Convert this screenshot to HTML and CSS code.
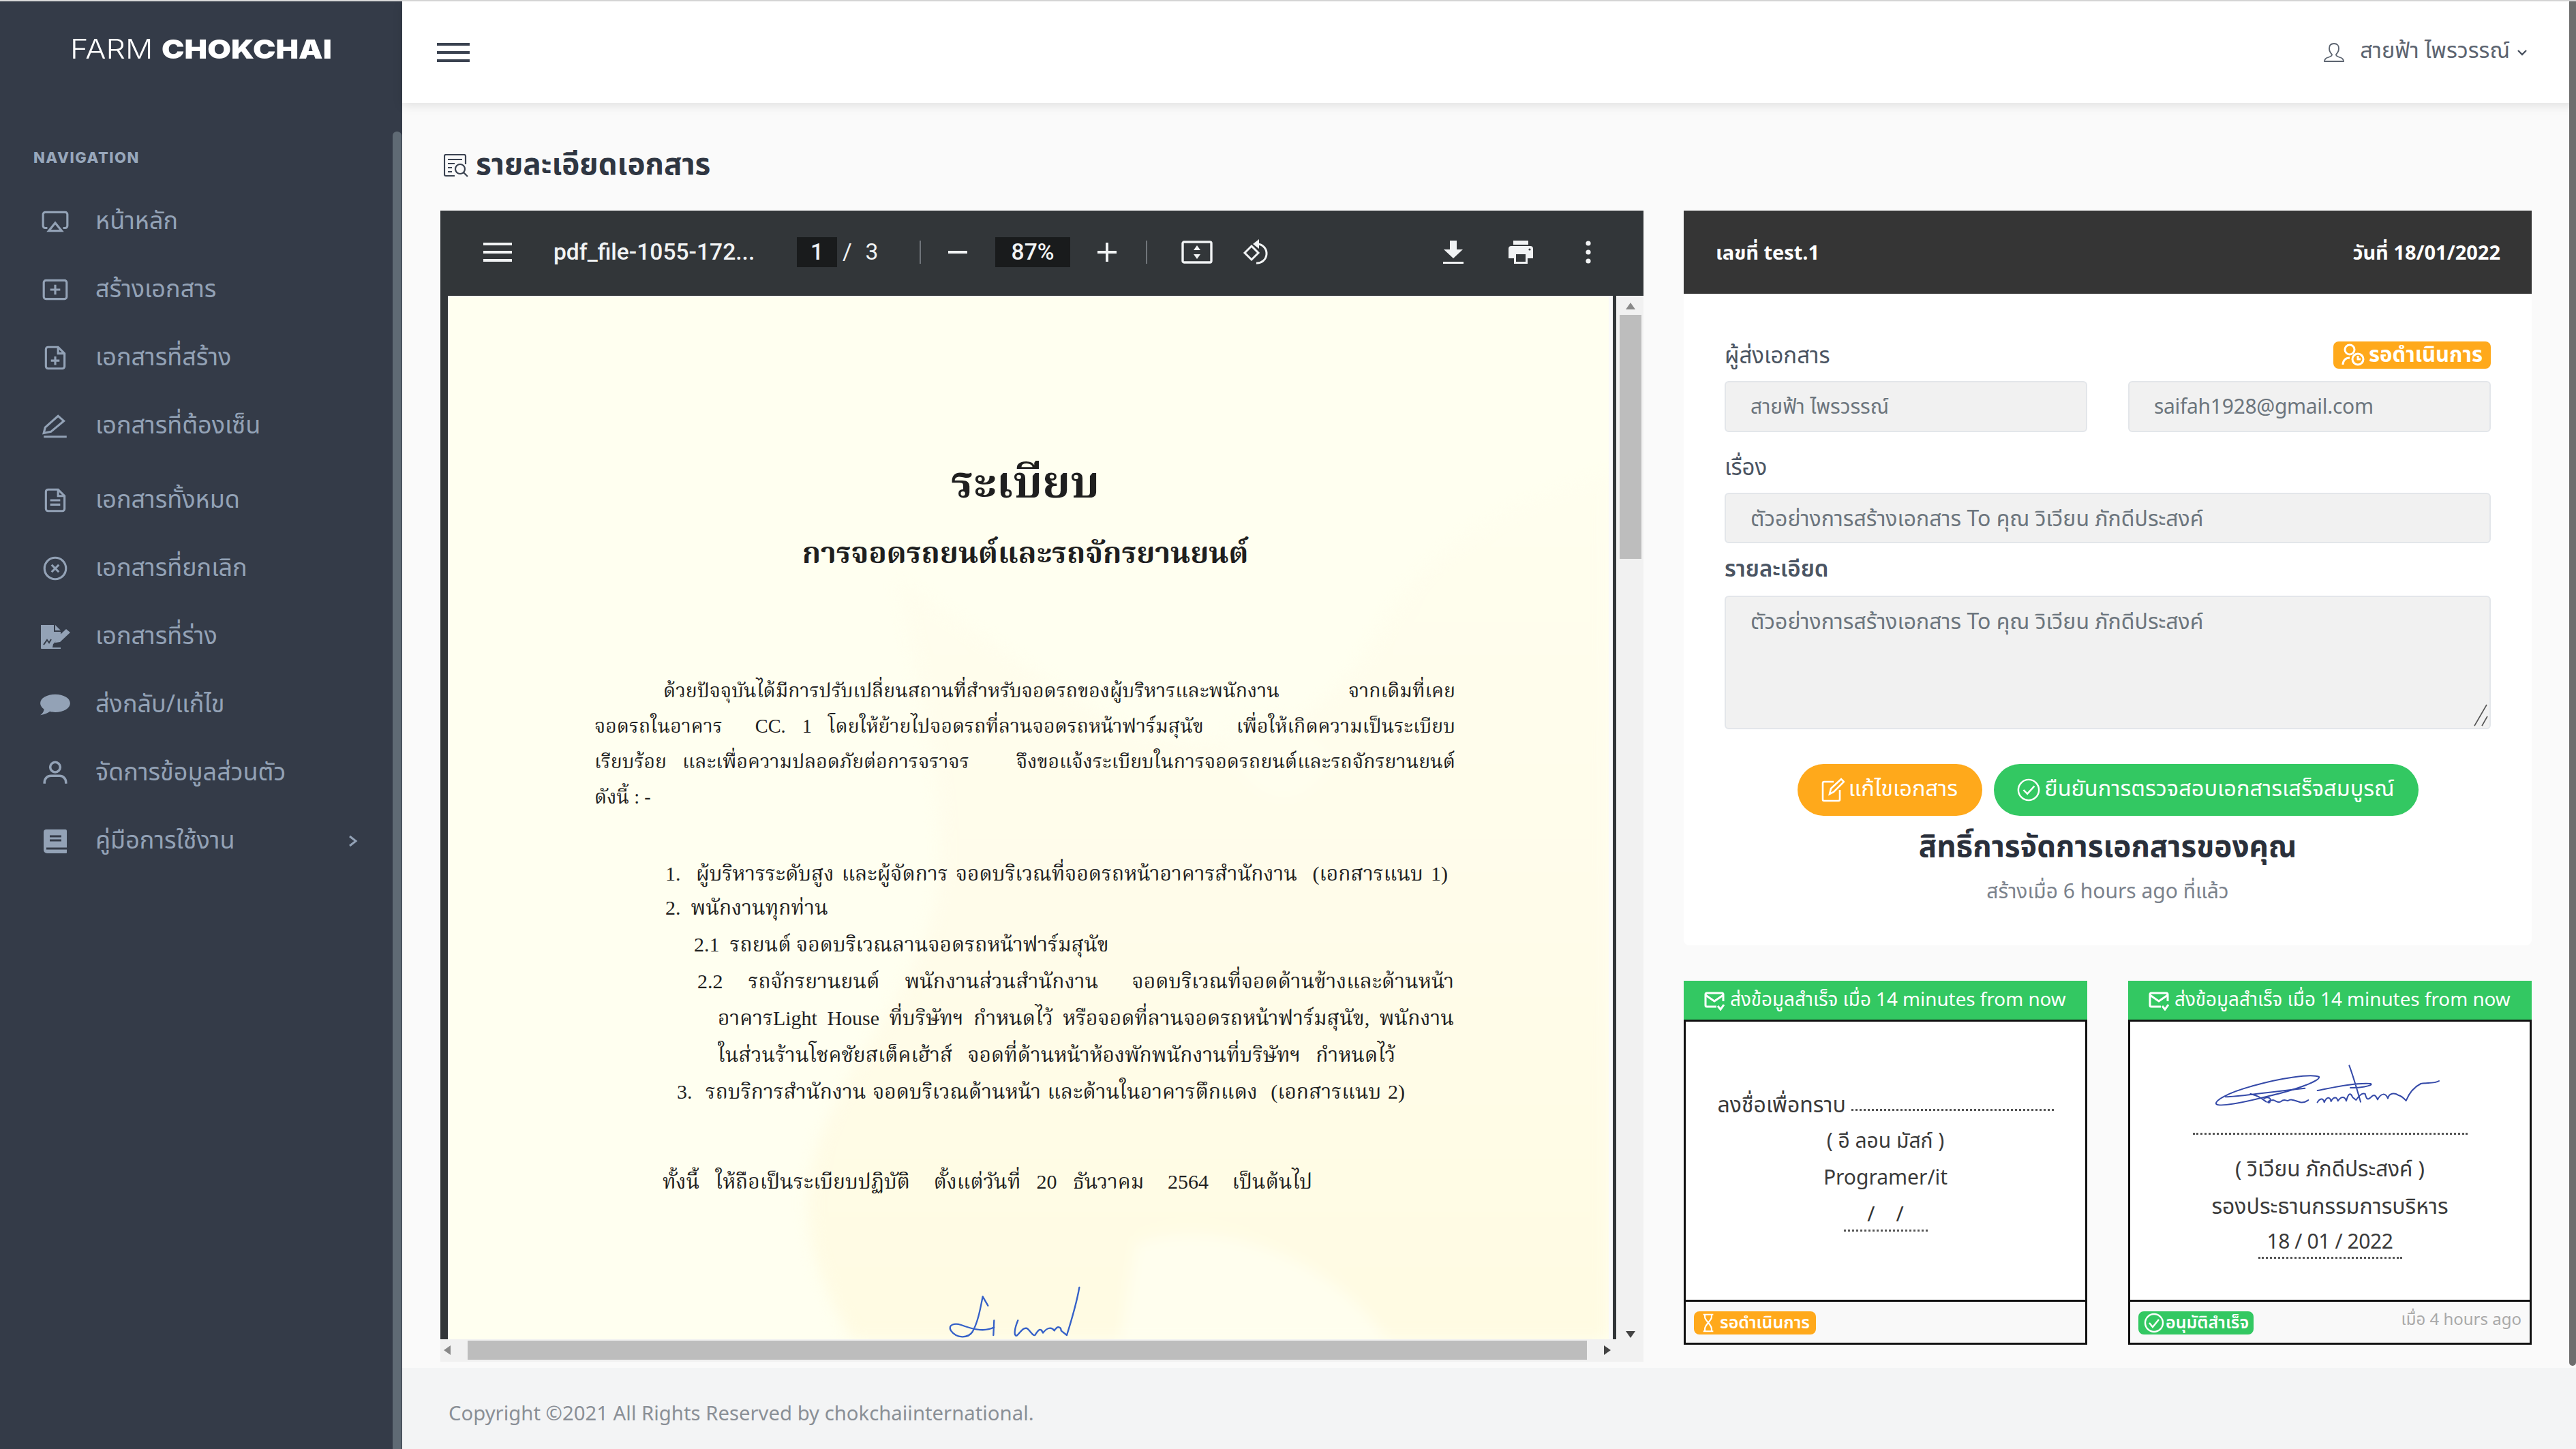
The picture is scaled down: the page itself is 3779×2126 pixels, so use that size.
FILE: index.html
```html
<!DOCTYPE html>
<html lang="th">
<head>
<meta charset="utf-8">
<title>รายละเอียดเอกสาร</title>
<link rel="stylesheet" href="styles.css">
</head>
<body>
<div class="app">
  <aside class="sidebar">
    <div class="logo"><span class="logo-text"><span class="logo-light">FARM</span> <span class="logo-bold">CHOKCHAI</span></span></div>
    <div class="nav-label">NAVIGATION</div>
    <nav class="nav">
      <a class="nav-item"><svg class="nav-icon" viewBox="0 0 40 30" fill="none" stroke="currentColor" stroke-width="3"><path d="M9 24H6a3 3 0 0 1-3-3V5a3 3 0 0 1 3-3h28a3 3 0 0 1 3 3v16a3 3 0 0 1-3 3h-3"/><path d="M20 17l9 11H11z"/></svg><span>หน้าหลัก</span></a>
      <a class="nav-item"><svg class="nav-icon" viewBox="0 0 40 30" fill="none" stroke="currentColor" stroke-width="3"><rect x="4" y="2" width="32" height="26" rx="3"/><path d="M20 8v14M13 15h14"/></svg><span>สร้างเอกสาร</span></a>
      <a class="nav-item"><svg class="nav-icon" viewBox="0 0 40 34" fill="none" stroke="currentColor" stroke-width="3"><path d="M7 5a3 3 0 0 1 3-3h14l9 9v18a3 3 0 0 1-3 3H10a3 3 0 0 1-3-3z"/><path d="M24 2v9h9M20 15v12M14 21h12"/></svg><span>เอกสารที่สร้าง</span></a>
      <a class="nav-item"><svg class="nav-icon" viewBox="0 0 40 34" fill="none" stroke="currentColor" stroke-width="3"><path d="M4 27l2-8L24 3l8 7-18 15z"/><path d="M4 32h32"/></svg><span>เอกสารที่ต้องเซ็น</span></a>
      <a class="nav-item nav-gap"><svg class="nav-icon" viewBox="0 0 40 34" fill="none" stroke="currentColor" stroke-width="3"><path d="M7 5a3 3 0 0 1 3-3h14l9 9v18a3 3 0 0 1-3 3H10a3 3 0 0 1-3-3z"/><path d="M24 2v9h9M13 17h14M13 23h14"/></svg><span>เอกสารทั้งหมด</span></a>
      <a class="nav-item"><svg class="nav-icon" viewBox="0 0 40 34" fill="none" stroke="currentColor" stroke-width="3"><circle cx="20" cy="17" r="15"/><path d="M15 12l10 10M25 12L15 22"/></svg><span>เอกสารที่ยกเลิก</span></a>
      <a class="nav-item"><svg class="nav-icon nav-icon-wide" viewBox="0 0 46 36" fill="currentColor"><path d="M2 1h19v10h10v7L20 29l-1 5h12v2H3a1 1 0 0 1-1-1z"/><path d="M23 1l8 8h-8zM23 27l1-6 15-14 6 5-15 14z"/><path d="M6 30l5-7 3 4 3-5" fill="none" stroke="#343b48" stroke-width="2"/></svg><span>เอกสารที่ร่าง</span></a>
      <a class="nav-item"><svg class="nav-icon nav-icon-wide" viewBox="0 0 42 30" fill="currentColor"><path d="M21 1c11 0 20 5 20 12s-9 12-20 12c-3 0-5 0-7-1-3 2-7 4-13 5 3-2 5-5 5-8-3-2-5-5-5-8C1 6 10 1 21 1z"/></svg><span>ส่งกลับ/แก้ไข</span></a>
      <a class="nav-item"><svg class="nav-icon" viewBox="0 0 40 34" fill="none" stroke="currentColor" stroke-width="3.4"><circle cx="20" cy="9" r="7"/><path d="M5 32v-2a9 9 0 0 1 9-9h12a9 9 0 0 1 9 9v2"/></svg><span>จัดการข้อมูลส่วนตัว</span></a>
      <a class="nav-item"><svg class="nav-icon" viewBox="0 0 40 36" fill="currentColor"><path d="M7 1h28a2 2 0 0 1 2 2v32a1 1 0 0 1-1 1H8a5 5 0 0 1-5-5V5a4 4 0 0 1 4-4z"/><path d="M12 11h17M12 17h17M7 29h30" stroke="#343b48" stroke-width="3"/></svg><span>คู่มือการใช้งาน</span><svg class="nav-caret" viewBox="0 0 16 18" fill="none" stroke="currentColor" stroke-width="3"><path d="M3 2l9 7-9 7"/></svg></a>
    </nav>
    <div class="sidebar-scroll"></div>
  </aside>

  <div class="main">
    <header class="topbar">
      <svg class="burger" viewBox="0 0 48 30" fill="none" stroke="#3a4250" stroke-width="4"><path d="M0 3h48M0 15h48M0 27h48"/></svg>
      <div class="user">
        <svg class="user-icon" viewBox="0 0 32 28" fill="none" stroke="#5c6470" stroke-width="1.8"><path d="M16 1c-5 0-7 3-7 7s2 7 4 9c0 2-2 3-5 4-4 1-6 3-6 6h28c0-3-2-5-6-6-3-1-5-2-5-4 2-2 4-5 4-9s-2-7-7-7z"/></svg>
        <span class="user-name">สายฟ้า ไพรวรรณ์</span>
        <svg class="user-caret" viewBox="0 0 16 10" fill="none" stroke="#4a5260" stroke-width="2.4"><path d="M2 2l6 6 6-6"/></svg>
      </div>
    </header>

    <main class="content">
      <h1 class="page-title">
        <svg class="title-icon" viewBox="0 0 36 34" fill="none" stroke="#3a4250" stroke-width="2.2"><path d="M16 32H3a2 2 0 0 1-2-2V3a2 2 0 0 1 2-2h27a2 2 0 0 1 2 2v12"/><path d="M6 8h21M6 14h10M6 20h6M6 26h6"/><circle cx="24" cy="22" r="7"/><path d="M29 27l6 6"/></svg>
        <span>รายละเอียดเอกสาร</span>
      </h1>

      <div class="columns">
        <section class="pdf">
          <div class="pdf-bar">
            <svg class="tb-burger" viewBox="0 0 42 30" fill="none" stroke="#f1f3f4" stroke-width="4"><path d="M0 3h42M0 15h42M0 27h42"/></svg>
            <span class="tb-title">pdf_file-1055-172...</span>
            <span class="tb-pagebox">1</span>
            <span class="tb-slash">/</span>
            <span class="tb-total">3</span>
            <i class="tb-sep tb-sep-a"></i>
            <svg class="tb-btn tb-minus" viewBox="0 0 30 30" fill="none" stroke="#f1f3f4" stroke-width="4"><path d="M1 15h28"/></svg>
            <span class="tb-zoom">87%</span>
            <svg class="tb-btn tb-plus" viewBox="0 0 30 30" fill="none" stroke="#f1f3f4" stroke-width="4"><path d="M1 15h28M15 1v28"/></svg>
            <i class="tb-sep tb-sep-b"></i>
            <svg class="tb-fit" viewBox="0 0 46 34" fill="none" stroke="#f1f3f4" stroke-width="3.4"><rect x="2" y="2" width="42" height="30" rx="2"/><path d="M23 7l-5 7h10zM23 27l-5-7h10z" fill="#f1f3f4" stroke="none"/></svg>
            <svg class="tb-rot" viewBox="0 0 43 38" fill="none" stroke="#f1f3f4" stroke-width="3"><path d="M13 10l10 10-10 10L3 20z"/><path d="M22 7a14 14 0 1 1-2 28"/><path d="M24 0v14l-9-7z" fill="#f1f3f4" stroke="none"/></svg>
            <span class="tb-space"></span>
            <svg class="tb-btn40" viewBox="0 0 40 36" fill="#f1f3f4"><path d="M15 1h10v13h9L20 27 6 14h9z"/><path d="M5 32h30v3H5z"/></svg>
            <svg class="tb-btn40 tb-m" viewBox="0 0 40 36" fill="#f1f3f4"><path d="M9 1h22v6H9zM6 9h28a4 4 0 0 1 4 4v14h-8v8H10v-8H2V13a4 4 0 0 1 4-4z"/><path d="M13 21h14v11H13z" fill="#323639"/><circle cx="33" cy="14" r="1.6" fill="#323639"/></svg>
            <svg class="tb-btn40 tb-m" viewBox="0 0 40 36" fill="#f1f3f4"><circle cx="20" cy="5" r="3.6"/><circle cx="20" cy="18" r="3.6"/><circle cx="20" cy="31" r="3.6"/></svg>
          </div>
          <div class="pdf-grid">
            <div class="pdf-view">
              <div class="doc">
                <svg class="doc-mark" viewBox="0 0 1520 1530" preserveAspectRatio="none">
                  <defs><linearGradient id="mark" x1="0" y1="0" x2="0" y2="1"><stop offset="0" stop-color="#fffeee"/><stop offset="0.5" stop-color="#fffcea"/><stop offset="1" stop-color="#fffbe2"/></linearGradient></defs>
                  <path fill="url(#mark)" d="M590 420C680 470 760 560 900 640 1050 680 1150 640 1230 470 1300 340 1420 300 1520 260V1530H530C470 1420 450 1320 500 1200 540 1100 620 1000 640 880 660 760 620 600 590 420z"/>
                  <path fill="#fffeee" d="M880 1530L900 1390C1000 1350 1150 1400 1230 1530zM1010 650C1060 600 1120 610 1160 680 1120 760 1060 760 1010 650z"/>
                </svg>
                <div class="doc-title">ระเบียบ</div>
                <div class="doc-sub">การจอดรถยนต์และรถจักรยานยนต์</div>
                <div class="pl j l-p1">ด้วยปัจจุบันได้มีการปรับเปลี่ยนสถานที่สำหรับจอดรถของผู้บริหารและพนักงาน &nbsp; จากเดิมที่เคย</div>
                <div class="pl j l-p2">จอดรถในอาคาร &nbsp;CC. 1 โดยให้ย้ายไปจอดรถที่ลานจอดรถหน้าฟาร์มสุนัข &nbsp;เพื่อให้เกิดความเป็นระเบียบ</div>
                <div class="pl j l-p2">เรียบร้อย และเพื่อความปลอดภัยต่อการจราจร &nbsp; จึงขอแจ้งระเบียบในการจอดรถยนต์และรถจักรยานยนต์</div>
                <div class="pl l-p2">ดังนี้ : -</div>
                <div class="dl j l-li1">1. &nbsp;ผู้บริหารระดับสูง และผู้จัดการ จอดบริเวณที่จอดรถหน้าอาคารสำนักงาน &nbsp;(เอกสารแนบ 1)</div>
                <div class="dl l-li2">2. &nbsp;พนักงานทุกท่าน</div>
                <div class="dl l-21">2.1 &nbsp;รถยนต์ จอดบริเวณลานจอดรถหน้าฟาร์มสุนัข</div>
                <div class="dl j l-22">2.2 &nbsp; รถจักรยานยนต์ &nbsp; พนักงานส่วนสำนักงาน &nbsp; &nbsp;จอดบริเวณที่จอดด้านข้างและด้านหน้า</div>
                <div class="dl j l-23">อาคารLight House ที่บริษัทฯ กำหนดไว้ หรือจอดที่ลานจอดรถหน้าฟาร์มสุนัข, พนักงาน</div>
                <div class="dl j l-24">ในส่วนร้านโชคชัยสเต็คเฮ้าส์ จอดที่ด้านหน้าห้องพักพนักงานที่บริษัทฯ กำหนดไว้</div>
                <div class="dl j l-3">3. &nbsp;รถบริการสำนักงาน จอดบริเวณด้านหน้า และด้านในอาคารตึกแดง &nbsp;(เอกสารแนบ 2)</div>
                <div class="dl j l-end">ทั้งนี้ &nbsp;ให้ถือเป็นระเบียบปฏิบัติ &nbsp; ตั้งแต่วันที่ &nbsp;20 &nbsp;ธันวาคม &nbsp; 2564 &nbsp; เป็นต้นไป</div>
                <svg class="doc-sign" viewBox="0 0 780 330" fill="none" stroke="#3560c8" stroke-width="7" stroke-linecap="round" stroke-linejoin="round"><path d="M245 100C235 150 225 210 200 255 180 285 130 285 105 250 90 225 120 215 150 225 190 240 250 260 295 235M245 100L268 140M295 205L292 270"/><path d="M400 205C385 240 380 275 395 272 410 260 420 235 440 240 455 250 465 275 475 270 490 245 500 235 510 260 525 240 545 230 560 250 575 225 590 235 590 250L615 270C640 190 660 120 670 60"/></svg>
              </div>
            </div>
            <div class="vscroll">
              <span class="arrow arrow-up"></span>
              <span class="vthumb"></span>
              <span class="arrow arrow-down"></span>
            </div>
            <div class="hscroll">
              <span class="arrow arrow-left"></span>
              <span class="hthumb"></span>
              <span class="arrow arrow-right"></span>
            </div>
            <div class="corner"></div>
          </div>
        </section>

        <div class="side">
          <section class="detail">
            <div class="detail-head"><span>เลขที่ test.1</span><span>วันที่ 18/01/2022</span></div>
            <div class="detail-body">
              <div class="label-row">
                <label class="field-label field-label-top">ผู้ส่งเอกสาร</label>
                <span class="badge-status"><svg class="badge-ico" viewBox="0 0 34 34" fill="none" stroke="#fff" stroke-width="3"><circle cx="12" cy="9" r="7"/><circle cx="24" cy="23" r="8"/><path d="M2 31c0-6 4-10 10-10M24 18v5h4"/></svg>รอดำเนินการ</span>
              </div>
              <div class="two">
                <div class="field">สายฟ้า ไพรวรรณ์</div>
                <div class="field field-mail">saifah1928@gmail.com</div>
              </div>
              <label class="field-label label-sub">เรื่อง</label>
              <div class="field field-subject">ตัวอย่างการสร้างเอกสาร To คุณ วิเวียน ภักดีประสงค์</div>
              <label class="field-label label-desc">รายละเอียด</label>
              <div class="field field-area">ตัวอย่างการสร้างเอกสาร To คุณ วิเวียน ภักดีประสงค์
                <svg class="grip" viewBox="0 0 22 34" fill="none" stroke="#555" stroke-width="1.6"><path d="M2 33L20 2M13 33l8-14"/></svg>
              </div>
              <div class="actions">
                <a class="btn btn-edit"><svg class="btn-ico" viewBox="0 0 34 36" fill="none" stroke="#fff" stroke-width="2.6"><path d="M27 18v14a2 2 0 0 1-2 2H4a2 2 0 0 1-2-2V8a2 2 0 0 1 2-2h14"/><path d="M12 24l2-8L29 2l4 4-15 15z"/></svg>แก้ไขเอกสาร</a>
                <a class="btn btn-ok"><svg class="btn-ico" viewBox="0 0 36 36" fill="none" stroke="#fff" stroke-width="2.6"><circle cx="18" cy="18" r="16"/><path d="M10 18l6 6 11-12"/></svg>ยืนยันการตรวจสอบเอกสารเสร็จสมบูรณ์</a>
              </div>
              <h2 class="rights">สิทธิ์การจัดการเอกสารของคุณ</h2>
              <p class="created">สร้างเมื่อ 6 hours ago ที่แล้ว</p>
            </div>
          </section>

          <div class="signers">
            <article class="signer">
              <div class="signer-head"><svg class="mail-ico" viewBox="0 0 30 28" fill="none" stroke="#fff" stroke-width="3"><path d="M28 14V4a2 2 0 0 0-2-2H4a2 2 0 0 0-2 2v16a2 2 0 0 0 2 2h14"/><path d="M2 5l13 9 13-9M20 21l4 5 5-7"/></svg>ส่งข้อมูลสำเร็จ เมื่อ 14 minutes from now</div>
              <div class="signer-body">
                <div class="ack"><span>ลงชื่อเพื่อทราบ</span><i class="dots dots-ack"></i></div>
                <div class="sline sl-a">( อี ลอน มัสก์ )</div>
                <div class="sline sl-b">Programer/it</div>
                <div class="sline sl-c">/ &nbsp; &nbsp;/</div>
                <i class="dots dots-date-a"></i>
              </div>
              <div class="signer-foot">
                <span class="mini mini-wait"><svg class="mini-ico" viewBox="0 0 22 34" fill="none" stroke="#fff" stroke-width="2.6"><path d="M2 2h18M2 32h18M5 2v5c0 5 12 14 12 20v5M17 2v5C17 12 5 21 5 27v5"/></svg>รอดำเนินการ</span>
              </div>
            </article>
            <article class="signer">
              <div class="signer-head"><svg class="mail-ico" viewBox="0 0 30 28" fill="none" stroke="#fff" stroke-width="3"><path d="M28 14V4a2 2 0 0 0-2-2H4a2 2 0 0 0-2 2v16a2 2 0 0 0 2 2h14"/><path d="M2 5l13 9 13-9M20 21l4 5 5-7"/></svg>ส่งข้อมูลสำเร็จ เมื่อ 14 minutes from now</div>
              <div class="signer-body signer-body-b">
                <svg class="sig" viewBox="0 0 1200 360" fill="none" stroke="#3449a8" stroke-width="6" stroke-linecap="round" stroke-linejoin="round"><path d="M100 240C90 225 150 190 260 160 380 125 520 105 552 120 560 135 460 175 330 205 230 230 120 255 100 240z"/><path d="M140 208C220 205 300 190 490 170M250 195C280 200 300 215 320 230"/><path d="M310 215C330 205 345 215 335 232 325 238 320 225 350 222 365 225 370 238 385 228 400 215 405 225 415 225 430 215 445 225 470 232 490 235 500 225 505 222"/><path d="M545 232C555 215 570 210 575 232 585 208 600 205 605 228 615 208 630 205 635 226 650 205 665 205 672 226 680 195 690 185 700 210L715 222C730 200 745 190 755 195 760 215 765 225 780 210 795 195 800 200 810 220 825 190 845 190 855 215 860 190 885 190 900 200 920 205 930 220 935 225 945 200 960 170 1000 150 1030 145 1060 150 1080 138"/><path d="M685 70C700 110 715 160 735 230M545 180C600 170 700 145 780 150 795 160 720 170 690 168"/></svg>
                <i class="dots dots-sig"></i>
                <div class="sline sl-d">( วิเวียน ภักดีประสงค์ )</div>
                <div class="sline sl-b sl-big">รองประธานกรรมการบริหาร</div>
                <div class="sline sl-e">18 / 01 / 2022</div>
                <i class="dots dots-date-b"></i>
              </div>
              <div class="signer-foot">
                <span class="mini mini-ok"><svg class="mini-ico-ok" viewBox="0 0 30 30" fill="none" stroke="#fff" stroke-width="2.4"><circle cx="15" cy="15" r="13"/><path d="M8 15l5 6 9-11"/></svg>อนุมัติสำเร็จ</span>
                <span class="ago">เมื่อ 4 hours ago</span>
              </div>
            </article>
          </div>
        </div>
      </div>
    </main>

    <footer class="footer">Copyright ©2021 All Rights Reserved by chokchaiinternational.</footer>
  </div>
  <div class="page-scroll"></div>
</div>
</body>
</html>
```

FILE: styles.css
```css
* { box-sizing: border-box; }
html, body { margin: 0; padding: 0; }
body {
  width: 3779px;
  height: 2126px;
  overflow: hidden;
  font-family: "Noto Sans Thai", "Noto Sans", "Open Sans", sans-serif;
  color: #6c757d;
  background: #f4f4f5;
}
.app { position: relative; display: flex; width: 3779px; height: 2126px; border-top: 2px solid #d9d9d9; }

/* Sidebar */
.sidebar { position: relative; flex: 0 0 590px; background: #343b48; color: #93a2b6; }
.logo { height: 138px; padding-left: 103px; display: flex; align-items: center; color: #fff; font-family: Inter, sans-serif; font-size: 39px; line-height: 1; white-space: nowrap; }
.logo-text { display: block; transform: scaleX(1.15); transform-origin: left center; }
.logo-light { font-weight: 300; }
.logo-bold { font-weight: 900; }
.nav-label { height: 30px; margin: 76px 0 29px 49px; font-family: Inter, sans-serif; font-size: 22px; font-weight: 800; line-height: 30px; letter-spacing: 1.5px; color: #98a7bb; }
.nav { display: flex; flex-direction: column; }
.nav-item { display: flex; align-items: center; height: 100px; padding-left: 60px; font-size: 36px; line-height: 1; }
.nav-gap { margin-top: 9px; }
.nav-icon { flex: none; width: 42px; height: 36px; margin-right: 38px; }
.nav-icon-wide { width: 46px; margin-left: -2px; margin-right: 36px; }
.nav-caret { width: 16px; height: 18px; margin-left: auto; margin-right: 64px; }
.sidebar-scroll { position: absolute; left: 576px; top: 191px; bottom: 0; width: 13px; border-radius: 6px 6px 0 0; background: #5f6a74; }

/* Main */
.main { flex: 1; display: flex; flex-direction: column; min-width: 0; }
.topbar { flex: none; position: relative; height: 149px; display: flex; align-items: center; justify-content: space-between; padding: 0 71px 0 51px; background: #fff; box-shadow: 0 4px 14px rgba(0,0,0,.1); }
.burger { width: 48px; height: 30px; }
.user { display: flex; align-items: center; height: 40px; color: #5c6470; font-size: 32.5px; line-height: 1; }
.user-icon { width: 32px; height: 28px; margin-right: 22px; }
.user-caret { width: 16px; height: 10px; margin-left: 10px; }
.content { flex: 1; padding: 62px 65px 0 56px; background: #fafafa; min-height: 0; }
.page-title { display: flex; align-items: center; height: 60px; margin: 0 0 36px; color: #2f3642; font-size: 44px; font-weight: 700; line-height: 1; }
.title-icon { width: 36px; height: 34px; margin-left: 5px; margin-right: 11px; }
.columns { display: flex; gap: 59px; align-items: flex-start; }

/* PDF */
.pdf { flex: 0 0 1765px; height: 1689px; display: flex; flex-direction: column; background: #323639; }
.pdf-bar { flex: none; height: 125px; display: flex; align-items: center; padding: 0 61px 4px 63px; color: #f1f3f4; font-family: Roboto, sans-serif; font-size: 33.6px; font-weight: 500; }
.tb-burger { flex: none; width: 42px; height: 30px; }
.tb-title { flex: none; width: 296px; margin-left: 61px; white-space: nowrap; font-weight: 500; }
.tb-pagebox { flex: none; width: 59px; height: 44px; margin-left: 61px; background: #191b1c; text-align: center; line-height: 44px; }
.tb-slash { flex: none; width: 30px; text-align: center; font-weight: 400; }
.tb-total { flex: none; width: 42px; text-align: center; font-weight: 400; }
.tb-sep { flex: none; width: 2px; height: 34px; background: #70757a; }
.tb-sep-a { margin-left: 49px; }
.tb-sep-b { margin-left: 42px; }
.tb-btn { flex: none; width: 30px; height: 30px; }
.tb-minus { margin-left: 39px; }
.tb-plus { margin-left: 39px; }
.tb-zoom { flex: none; width: 110px; height: 44px; margin-left: 40px; background: #191b1c; text-align: center; line-height: 44px; }
.tb-fit { flex: none; width: 46px; height: 34px; margin-left: 50px; }
.tb-rot { flex: none; width: 43px; height: 38px; margin-left: 44px; }
.tb-space { flex: 1; }
.tb-btn40 { flex: none; width: 40px; height: 36px; }
.tb-m { margin-left: 59px; }

.pdf-grid { flex: 1; min-height: 0; display: grid; grid-template-columns: 1725px 40px; grid-template-rows: 1531px 33px; }
.pdf-view { padding: 0 5px 0 11px; overflow: hidden; background: #323639; }
.doc { position: relative; height: 1531px; overflow: hidden; padding-top: 216px; border-right: 6px solid #fafafa; background: #fffff0; color: #1f1f1f; font-family: "Liberation Serif", "Noto Serif Thai", "Noto Sans Thai", serif; }
.doc-mark { position: absolute; inset: 0; width: 100%; height: 100%; filter: blur(10px); }
.doc-title, .doc-sub, .dl, .pl, .doc-sign { position: relative; }
.doc-title { width: 400px; height: 116px; margin-left: 647px; text-align: center; font-size: 66px; font-weight: 700; line-height: 116px; }
.doc-sub { width: 700px; height: 50px; margin-top: 20px; margin-left: 497px; font-size: 43.5px; font-weight: 700; line-height: 50px; text-align: center; white-space: nowrap; }
.dl, .pl { white-space: nowrap; }
.dl { height: 54px; font-size: 30px; line-height: 54px; }
.pl { height: 52px; font-size: 28.4px; line-height: 52px; }
.j { text-align: justify; text-align-last: justify; white-space: normal; overflow: hidden; }
.l-p1 { margin-left: 316px; width: 1162px; margin-top: 152px; }
.l-p2 { margin-left: 215px; width: 1263px; }
.l-li1 { margin-left: 319px; width: 1148px; margin-top: 59px; }
.l-li2 { margin-left: 319px; margin-top: -4px; }
.l-21 { margin-left: 361px; }
.l-22 { margin-left: 366px; width: 1110px; }
.l-23 { margin-left: 396px; width: 1080px; }
.l-24 { margin-left: 396px; width: 994px; }
.l-3 { margin-left: 336px; width: 1068px; }
.l-end { margin-left: 315px; width: 953px; margin-top: 78px; }
.doc-sign { display: block; width: 260px; height: 110px; margin: 108px 0 0 703px; }

.vscroll { position: relative; grid-row: 1; grid-column: 2; background: #f1f1f1; }
.vthumb { position: absolute; left: 5px; top: 28px; width: 32px; height: 358px; background: #bdbdbd; }
.hscroll { position: relative; grid-row: 2; grid-column: 1; background: #f1f1f1; }
.hthumb { position: absolute; left: 40px; top: 2px; width: 1642px; height: 28px; background: #bdbdbd; }
.corner { grid-row: 2; grid-column: 2; background: #f1f1f1; }
.arrow { position: absolute; width: 0; height: 0; border-style: solid; border-color: transparent; }
.arrow-up { left: 14px; top: 10px; border-width: 0 7px 10px; border-bottom-color: #888; }
.arrow-down { left: 14px; bottom: 2px; border-width: 10px 7px 0; border-top-color: #444; }
.arrow-left { left: 5px; top: 9px; border-width: 7px 10px 7px 0; border-right-color: #888; }
.arrow-right { right: 8px; top: 9px; border-width: 7px 0 7px 10px; border-left-color: #444; }

/* Right column */
.side { flex: 1; display: flex; flex-direction: column; gap: 52px; min-width: 0; }
.detail { height: 1078px; border-radius: 0 0 8px 8px; background: #fff; }
.detail-head { height: 122px; display: flex; align-items: center; justify-content: space-between; padding: 4px 46px 0 47px; background: #353535; color: #fff; font-size: 29px; font-weight: 700; }
.detail-body { display: flex; flex-direction: column; padding: 70px 60px 0; }
.label-row { display: flex; align-items: center; justify-content: space-between; height: 40px; margin-bottom: 18px; }
.field-label { display: block; color: #4b5563; font-size: 33px; line-height: 44px; }
.field-label-top { position: relative; top: 2px; }
.badge-status { display: flex; align-items: center; justify-content: center; flex: 0 0 231px; height: 40px; border-radius: 8px; background: #ffa91b; color: #fff; font-size: 31px; font-weight: 700; line-height: 1; }
.badge-ico { width: 34px; height: 34px; margin-right: 6px; }
.two { display: flex; gap: 60px; }
.two .field { flex: 1; }
.field { height: 75px; padding: 2px 36px 0; border: 2px solid #e3e6ea; border-radius: 6px; background: #f1f1f1; color: #6c757d; font-size: 30px; line-height: 71px; white-space: nowrap; }
.field-mail { letter-spacing: -0.3px; }
.field-subject, .field-area { font-size: 32px; }
.label-sub { margin-top: 31px; height: 40px; }
.field-subject { margin-top: 18px; height: 74px; }
.label-desc { margin-top: 17px; height: 40px; font-weight: 600; }
.field-area { position: relative; margin-top: 20px; height: 196px; }
.grip { position: absolute; right: 2px; bottom: 2px; width: 22px; height: 34px; }
.actions { display: flex; justify-content: center; gap: 17px; margin-top: 51px; }
.btn { display: flex; align-items: center; justify-content: center; height: 76px; border-radius: 38px; color: #fff; font-size: 32.5px; line-height: 1; white-space: nowrap; }
.btn-ico { width: 34px; height: 36px; margin-right: 6px; }
.btn-edit { flex: 0 0 271px; background: #ffa91b; }
.btn-ok { flex: 0 0 623px; background: #33c862; }
.rights { margin: 22px 0 0; height: 50px; color: #2a303b; font-size: 44px; font-weight: 700; line-height: 50px; text-align: center; }
.created { margin: 20px 0 0; height: 40px; color: #7b828c; font-size: 30px; line-height: 40px; text-align: center; }

.signers { display: flex; gap: 60px; }
.signer { flex: 1; height: 534px; display: flex; flex-direction: column; }
.signer-head { flex: none; height: 57px; display: flex; align-items: center; padding: 2px 0 0 30px; background: #33c862; color: #fff; font-size: 27.8px; line-height: 1; white-space: nowrap; }
.mail-ico { width: 30px; height: 28px; margin-right: 8px; }
.signer-body { flex: 1; display: flex; flex-direction: column; align-items: center; padding-top: 99px; border: 3px solid #111; border-bottom: 0; background: #fff; color: #3a3a3a; font-size: 30px; line-height: 1; }
.signer-body-b { padding-top: 41px; }
.ack { display: flex; align-items: flex-end; width: 493px; height: 40px; }
.ack span { white-space: nowrap; font-size: 32px; }
.dots { display: block; height: 3px; border-top: 3px dotted #555; }
.dots-ack { flex: 1; margin: 0 0 8px 8px; }
.sline { height: 40px; line-height: 40px; white-space: nowrap; }
.sl-a { margin-top: 17px; }
.sl-b { margin-top: 14px; }
.sl-c { margin-top: 14px; color: #333; }
.sl-d { margin-top: 32px; font-size: 31.5px; }
.sl-big { font-size: 32px; }
.sl-e { margin-top: 12px; letter-spacing: -0.4px; }
.dots-date-a { width: 123px; margin-top: 1px; }
.dots-sig { width: 403px; margin-top: 2px; }
.dots-date-b { width: 211px; margin-top: 1px; }
.sig { flex: none; width: 400px; height: 120px; }
.signer-foot { flex: none; height: 66px; display: flex; align-items: center; justify-content: space-between; padding: 2px 12px 0; border: 3px solid #111; background: #f9f9f9; }
.mini { display: flex; align-items: center; height: 34px; padding: 0 8px 0 12px; border-radius: 8px; color: #fff; font-size: 25px; font-weight: 600; line-height: 1; white-space: nowrap; }
.mini-wait { width: 179px; background: #ffa91b; }
.mini-ok { width: 169px; background: #33c862; padding: 0 2px 0 8px; }
.mini-ico { width: 18px; height: 28px; margin-right: 8px; }
.mini-ico-ok { width: 30px; height: 30px; margin-right: 2px; }
.ago { margin: -8px 0 0; color: #a9a9a9; font-size: 24px; line-height: 1; }

.footer { flex: 0 0 119px; padding: 52px 0 0 68px; background: #f3f4f5; color: #8a8f96; font-size: 29.3px; line-height: 32px; }
.page-scroll { position: absolute; left: 3769px; top: 0; width: 10px; height: 2002px; border-radius: 0 0 5px 5px; background: #6e6e6e; }
```
